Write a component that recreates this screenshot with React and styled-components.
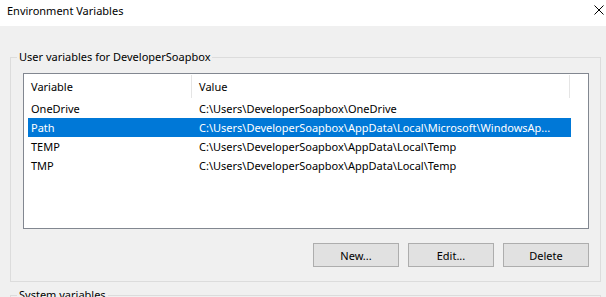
import styled, { createGlobalStyle } from "styled-components";

const GlobalStyle = createGlobalStyle`
  html, body {
    margin: 0;
    padding: 0;
    background: #f0f0f0;
  }
  body {
    font-family: "Noto Sans", "Liberation Sans", sans-serif;
    font-size: 11px;
    color: #000;
  }
`;

// Janela inteira do diálogo
const Window = styled.div`
  width: 606px;
  height: 297px;
  overflow: hidden;
  background: #f0f0f0;
`;

// Barra de título branca com o X
const TitleBar = styled.div`
  height: 26px;
  background: #fff;
  display: flex;
  align-items: center;
  justify-content: space-between;
  padding: 0 2px 0 7px;
  box-sizing: border-box;
`;

const Title = styled.span`
  font-size: 11px;
  line-height: 16px;
  margin-top: -4px;
`;

const CloseIcon = styled.svg`
  width: 10px;
  height: 10px;
  margin-top: -6px;
`;

const Body = styled.div`
  padding: 23px 5px 0 10px;
`;

// Caixa de grupo (fieldset estilo Windows)
const GroupBox = styled.fieldset`
  margin: 0 0 ${(p) => p.$gap || 0}px 0;
  padding: 8px 11px 14px 12px;
  border: 1px solid #dcdcdc;
  min-width: 0;
`;

const Legend = styled.legend`
  margin-left: -6px;
  padding: 0 2px;
  line-height: 16px;
`;

// Lista com cabeçalho
const ListBox = styled.div`
  height: 154px;
  background: #fff;
  border: 1px solid #828790;
  overflow: hidden;
`;

const HeaderRow = styled.div`
  display: grid;
  grid-template-columns: 168px 378px 1fr;
  height: 25px;
`;

const HeaderCell = styled.div`
  display: flex;
  align-items: center;
  padding-left: 7px;
  border-right: ${(p) => (p.$last ? "none" : "1px solid #e5e5e5")};
  margin-top: 1px;
  height: 23px;
  box-sizing: border-box;
`;

const Row = styled.div`
  display: grid;
  grid-template-columns: 164px 379px;
  height: 19px;
  margin-left: 4px;
  width: 543px;
  background: ${(p) => (p.$selected ? "#0078d7" : "transparent")};
  color: ${(p) => (p.$selected ? "#fff" : "#000")};
`;

const Cell = styled.div`
  display: flex;
  align-items: center;
  padding-left: ${(p) => p.$pad}px;
  white-space: nowrap;
  overflow: hidden;
  min-width: 0;
`;

const ButtonBar = styled.div`
  display: flex;
  justify-content: flex-end;
  gap: 9px;
  margin-top: 14px;
`;

const Button = styled.button`
  width: 86px;
  height: 24px;
  background: #e1e1e1;
  border: 1px solid #adadad;
  font-family: inherit;
  font-size: 11px;
  color: #000;
  padding: 0;
`;

const rows = [
  ["OneDrive", "C:\\Users\\DeveloperSoapbox\\OneDrive"],
  ["Path", "C:\\Users\\DeveloperSoapbox\\AppData\\Local\\Microsoft\\WindowsAp..."],
  ["TEMP", "C:\\Users\\DeveloperSoapbox\\AppData\\Local\\Temp"],
  ["TMP", "C:\\Users\\DeveloperSoapbox\\AppData\\Local\\Temp"],
];

const App = () => {
  return (
    <Window>
      <GlobalStyle />
      <TitleBar>
        <Title>Environment Variables</Title>
        <CloseIcon viewBox="0 0 10 10">
          <path d="M0.5 0.5 L9.5 9.5 M9.5 0.5 L0.5 9.5" stroke="#000" strokeWidth="1" fill="none" />
        </CloseIcon>
      </TitleBar>
      <Body>
        <GroupBox $gap={5}>
          <Legend>User variables for DeveloperSoapbox</Legend>
          <ListBox>
            <HeaderRow>
              <HeaderCell>Variable</HeaderCell>
              <HeaderCell>Value</HeaderCell>
              <HeaderCell $last />
            </HeaderRow>
            {rows.map(([name, value]) => (
              <Row key={name} $selected={name === "Path"}>
                <Cell $pad={3}>{name}</Cell>
                <Cell $pad={7}>{value}</Cell>
              </Row>
            ))}
          </ListBox>
          <ButtonBar>
            <Button>New...</Button>
            <Button>Edit...</Button>
            <Button>Delete</Button>
          </ButtonBar>
        </GroupBox>
        <GroupBox>
          <Legend>System variables</Legend>
        </GroupBox>
      </Body>
    </Window>
  );
};

export default App;
